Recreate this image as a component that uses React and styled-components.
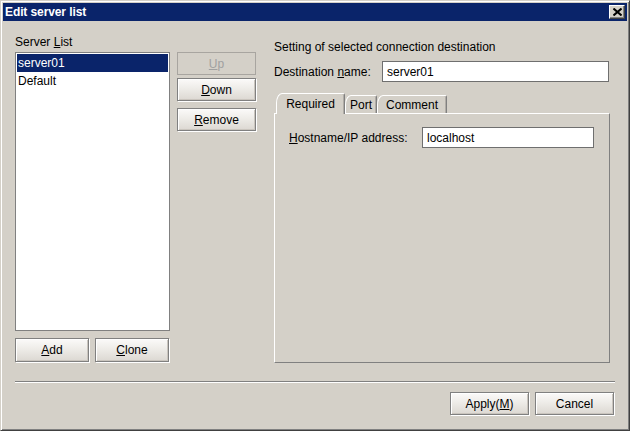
import React from 'react';
import styled, { createGlobalStyle, css } from 'styled-components';

const GlobalStyle = createGlobalStyle`
  html, body {
    margin: 0;
    padding: 0;
    background: #d4d0c8;
  }
  body {
    font-family: "Liberation Sans", Arial, sans-serif;
    font-size: 12px;
    color: #000;
  }
`;

const Window = styled.div`
  width: 630px;
  height: 431px;
  box-sizing: border-box;
  display: flex;
  flex-direction: column;
  background: #d4d0c8;
  border: 1px solid;
  border-color: #d4d0c8 #404040 #404040 #d4d0c8;
  box-shadow: inset 1px 1px 0 #fff, inset -1px -1px 0 #808080;
  padding: 2px;
`;

const TitleBar = styled.div`
  height: 18px;
  flex: none;
  display: flex;
  align-items: center;
  justify-content: space-between;
  background: #0a246a;
  padding: 0 2px 0 2px;
`;

const TitleText = styled.div`
  color: #fff;
  font-weight: bold;
  font-size: 12px;
  letter-spacing: -0.1px;
`;

const CloseButton = styled.div`
  width: 16px;
  height: 14px;
  box-sizing: border-box;
  display: flex;
  align-items: center;
  justify-content: center;
  background: #d4d0c8;
  border-top: 1px solid #fff;
  border-left: 1px solid #fff;
  border-right: 1px solid #404040;
  border-bottom: 1px solid #404040;
  box-shadow: inset -1px -1px 0 #808080;
`;

const Main = styled.div`
  display: flex;
  padding: 14px 0 0 12px;
`;

const LeftCol = styled.div`
  width: 155px;
  display: flex;
  flex-direction: column;
`;

const Label = styled.div`
  line-height: 14px;
  height: 14px;
  white-space: nowrap;
  width: ${(props) => props.width || 'auto'};
  flex: none;
`;

const ListBox = styled.div`
  margin-top: 3px;
  height: 279px;
  box-sizing: border-box;
  background: #fff;
  border: 1px solid #808080;
  padding: 1px;
`;

const ListRow = styled.div`
  height: 18px;
  line-height: 18px;
  padding-left: 1px;
  ${(props) =>
    props.selected &&
    css`
      background: #0a246a;
      color: #fff;
    `}
`;

const ButtonRow = styled.div`
  display: flex;
  gap: 6px;
  margin-top: 7px;
`;

const Button = styled.div`
  width: ${(props) => props.w}px;
  height: ${(props) => props.h || 23}px;
  margin-top: ${(props) => props.mt || 0}px;
  box-sizing: border-box;
  display: flex;
  align-items: center;
  justify-content: center;
  flex: none;
  border: 1px solid #808080;
  ${(props) =>
    props.disabled
      ? css`
          border-color: #a8a5a0;
          color: #a0a0a0;
          background: #d4d0c8;
        `
      : css`
          background: linear-gradient(to bottom, #fbfaf9 0%, #eeece8 45%, #dcd8d2 100%);
          box-shadow: inset 1px 1px 0 #fff, inset -1px -1px 0 #cac5be, 1px 1px 0 #fff;
        `}
`;

const MidCol = styled.div`
  width: 79px;
  margin-left: 7px;
  padding-top: 17px;
  display: flex;
  flex-direction: column;
`;

const RightCol = styled.div`
  width: 336px;
  margin-left: 18px;
  padding-top: 5px;
  display: flex;
  flex-direction: column;
`;

const FieldRow = styled.div`
  display: flex;
  align-items: center;
  margin-top: ${(props) => props.mt || 0}px;
`;

const TextBox = styled.div`
  width: ${(props) => props.w}px;
  height: 21px;
  box-sizing: border-box;
  border: 1px solid #6f6f6f;
  background: #fff;
  padding-left: 4px;
  line-height: 20px;
`;

const TabRow = styled.div`
  display: flex;
  align-items: flex-end;
  height: 20px;
  margin-top: 11px;
  padding-left: 2px;
`;

const Tab = styled.div`
  width: ${(props) => props.w}px;
  height: 18px;
  box-sizing: border-box;
  display: flex;
  align-items: center;
  justify-content: center;
  border-top: 1px solid #fff;
  border-left: 1px solid #fff;
  border-right: 1px solid #808080;
  border-top-left-radius: 6px 10px;
  border-top-right-radius: 2px;
  box-shadow: inset -1px 0 0 #b0aca6;
  background: #d4d0c8;
  ${(props) =>
    props.active &&
    css`
      position: relative;
      z-index: 1;
      height: 21px;
      margin-bottom: -1px;
      padding-bottom: 1px;
    `}
`;

const TabPanel = styled.div`
  height: 250px;
  box-sizing: border-box;
  border-top: 1px solid #fff;
  border-left: 1px solid #fff;
  border-right: 1px solid #808080;
  border-bottom: 1px solid #808080;
  padding: 13px 0 0 14px;
`;

const Separator = styled.div`
  margin: 18px 12px 0 12px;
  border-top: 1px solid #808080;
  border-bottom: 1px solid #fff;
`;

const Footer = styled.div`
  display: flex;
  justify-content: flex-end;
  gap: 6px;
  margin-top: 9px;
  padding-right: 13px;
`;

const App = () => {
  return (
    <>
      <GlobalStyle />
      <Window>
        <TitleBar>
          <TitleText>Edit server list</TitleText>
          <CloseButton>
            <svg width="9" height="8" viewBox="0 0 9 8">
              <path d="M0.5 0.5 L8.5 7.5 M8.5 0.5 L0.5 7.5" stroke="#000" strokeWidth="2" />
            </svg>
          </CloseButton>
        </TitleBar>

        <Main>
          <LeftCol>
            <Label>
              Server <u>L</u>ist
            </Label>
            <ListBox>
              <ListRow selected>server01</ListRow>
              <ListRow>Default</ListRow>
            </ListBox>
            <ButtonRow>
              <Button w={74} h={24}>
                <u>A</u>dd
              </Button>
              <Button w={74} h={24}>
                <u>C</u>lone
              </Button>
            </ButtonRow>
          </LeftCol>

          <MidCol>
            <Button w={79} disabled>
              <u>U</u>p
            </Button>
            <Button w={79} mt={3}>
              <u>D</u>own
            </Button>
            <Button w={79} mt={7}>
              <u>R</u>emove
            </Button>
          </MidCol>

          <RightCol>
            <Label>Setting of selected connection destination</Label>
            <FieldRow mt={7}>
              <Label width="108px">
                Destination <u>n</u>ame:
              </Label>
              <TextBox w={227}>server01</TextBox>
            </FieldRow>
            <TabRow>
              <Tab w={69} active>
                Required
              </Tab>
              <Tab w={32}>Port</Tab>
              <Tab w={70}>Comment</Tab>
            </TabRow>
            <TabPanel>
              <FieldRow>
                <Label width="133px">
                  <u>H</u>ostname/IP address:
                </Label>
                <TextBox w={172}>localhost</TextBox>
              </FieldRow>
            </TabPanel>
          </RightCol>
        </Main>

        <Separator />

        <Footer>
          <Button w={79}>
            Apply(<u>M</u>)
          </Button>
          <Button w={79}>Cancel</Button>
        </Footer>
      </Window>
    </>
  );
};

export default App;
